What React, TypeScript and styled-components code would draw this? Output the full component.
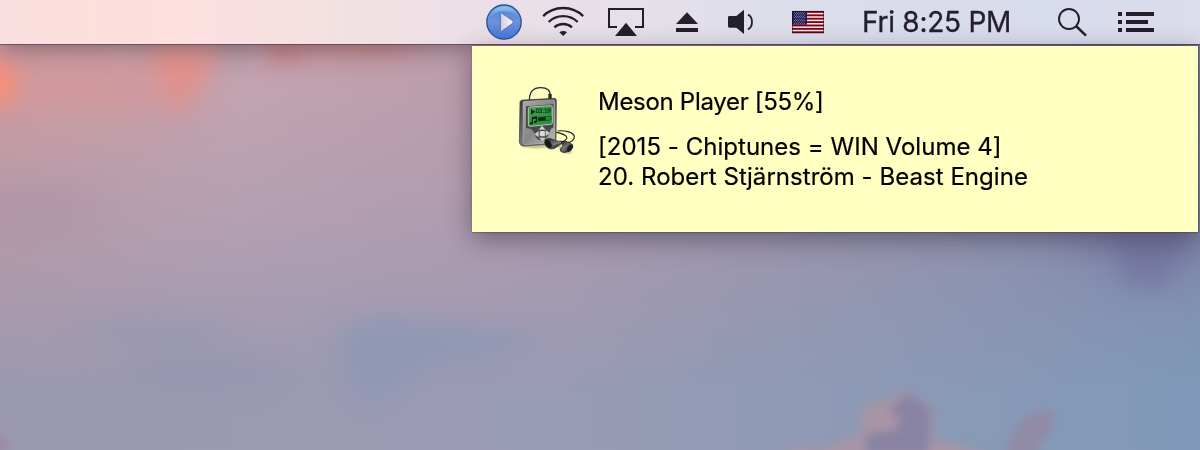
import React from "react";
import styled, { createGlobalStyle } from "styled-components";

const Global = createGlobalStyle`
  * { box-sizing: border-box; }
  body { margin: 0; overflow: hidden; }
`;

const Desktop = styled.div`
  display: grid;
  width: 1200px;
  height: 450px;
  overflow: hidden;
  font-family: Inter, "Liberation Sans", sans-serif;
`;

const Wallpaper = styled.svg`
  grid-area: 1 / 1;
  width: 1200px;
  height: 450px;
  display: block;
`;

const Screen = styled.div`
  grid-area: 1 / 1;
  z-index: 1;
  display: flex;
  flex-direction: column;
`;

const MenuBar = styled.header`
  flex: none;
  display: flex;
  align-items: flex-start;
  height: 44px;
  padding-left: 486px;
  color: #241f2b;
  background: linear-gradient(90deg, #fbdfe0 0, #fde0dc 90px, #fcdfe0 220px, #f3e1e2 330px, #ebdfe7 480px, #e5e0e9 640px, #dedeea 760px, #d9dceb 900px, #d9dcec 1100px, #dcdcea 1200px);
  box-shadow: 0 1px 0 rgba(73, 43, 65, 0.55), 0 3px 24px rgba(55, 35, 45, 0.5);
`;

const StatusIcon = styled.svg<{ $width: number; $gap?: number }>`
  flex: none;
  display: block;
  width: ${(p) => p.$width}px;
  height: 44px;
  margin-left: ${(p) => p.$gap ?? 0}px;
`;

const Clock = styled.time`
  flex: none;
  width: 152px;
  margin-left: 38px;
  font-size: 28px;
  line-height: 44px;
  letter-spacing: -0.25px;
  white-space: nowrap;
  -webkit-text-stroke: 0.35px currentColor;
`;

const Notification = styled.section`
  display: flex;
  align-self: flex-end;
  width: 726px;
  height: 186px;
  margin: 2px 2px 0 0;
  padding: 39px 0 0 45px;
  background: #ffffc1;
  color: #000;
  box-shadow: 0 0 1.5px 0.5px rgba(30, 20, 50, 0.75), 0 7px 24px rgba(35, 30, 45, 0.46);
`;

const PlayerIcon = styled.svg`
  flex: none;
  width: 60px;
  height: 70px;
`;

const Message = styled.div`
  display: flex;
  flex-direction: column;
  gap: 15px;
  padding: 2px 0 0 21px;
`;

const Line = styled.p<{ $spacing: number }>`
  margin: 0;
  font-size: 24px;
  line-height: 30px;
  letter-spacing: ${(p) => p.$spacing}px;
  white-space: nowrap;
  -webkit-text-stroke: 0.2px currentColor;
`;

const Sky = () => (
  <Wallpaper viewBox="0 0 1200 450" aria-hidden="true">
    <defs>
      <linearGradient id="low">
        <stop offset="0" stopColor="#9b99b0" />
        <stop offset=".45" stopColor="#9a9bb5" />
        <stop offset=".72" stopColor="#8d9ab5" />
        <stop offset="1" stopColor="#7f99b8" />
      </linearGradient>
      <linearGradient id="high">
        <stop offset="0" stopColor="#c99da3" />
        <stop offset=".2" stopColor="#c3a3b0" />
        <stop offset=".4" stopColor="#bb9cab" />
        <stop offset="1" stopColor="#8482a6" />
      </linearGradient>
      <linearGradient id="fade" x2="0" y2="1">
        <stop offset=".2" stopColor="#fff" />
        <stop offset=".5" stopColor="#fff" stopOpacity=".6" />
        <stop offset=".86" stopColor="#fff" stopOpacity="0" />
      </linearGradient>
      <mask id="top" style={{ maskType: "alpha" }}><rect width="1200" height="450" fill="url(#fade)" /></mask>
      <filter id="b4" x="-50%" y="-50%" width="200%" height="200%" colorInterpolationFilters="sRGB"><feGaussianBlur stdDeviation="5" /></filter>
      <filter id="b10" x="-50%" y="-100%" width="200%" height="300%" colorInterpolationFilters="sRGB"><feGaussianBlur stdDeviation="11" /></filter>
      <filter id="b25" x="-50%" y="-100%" width="200%" height="300%" colorInterpolationFilters="sRGB"><feGaussianBlur stdDeviation="22" /></filter>
    </defs>
    <rect width="1200" height="450" fill="url(#low)" />
    <rect width="1200" height="450" fill="url(#high)" mask="url(#top)" />
    <g filter="url(#b25)">
      <ellipse cx="90" cy="85" rx="110" ry="26" fill="#dc9292" opacity=".6" />
      <ellipse cx="30" cy="210" rx="70" ry="20" fill="#a78da9" opacity=".6" />
      <ellipse cx="1150" cy="240" rx="90" ry="28" fill="#7674a0" opacity=".5" />
    </g>
    <g filter="url(#b10)">
      <ellipse cx="0" cy="83" rx="16" ry="25" fill="#fc8d76" />
      <path d="M150 44H222L212 70 177 116 163 92Z" fill="#f0897c" opacity=".6" />
      <ellipse cx="285" cy="50" rx="22" ry="15" fill="#cf6f72" opacity=".6" />
      <ellipse cx="360" cy="44" rx="60" ry="16" fill="#d27e78" opacity=".5" />
      <ellipse cx="235" cy="48" rx="15" ry="18" fill="#a88f9b" opacity=".6" />
      <path d="M70 328Q150 312 235 330L210 342Q130 348 70 328Z" fill="#9098b3" opacity=".6" />
      <path d="M335 335Q375 306 410 320L550 337Q480 362 430 364L370 404 345 370Z" fill="#8896b5" opacity=".65" />
      <ellipse cx="200" cy="372" rx="75" ry="18" fill="#9496b0" opacity=".55" />
      <path d="M1110 234H1190L1165 290 1124 285Z" fill="#6d6b99" opacity=".55" />
    </g>
    <g filter="url(#b4)">
      <path d="M770 460Q795 444 820 450L850 440 862 434 862 414Q867 402 888 400L904 391 931 407Q938 426 929 440L955 444 1000 460Z" fill="#b3939f" opacity=".75" />
      <path d="M895 405L907 393 931 410 928 455H866L865 435 895 430 901 420 888 410Z" fill="#817ea2" opacity=".8" />
      <path d="M1002 460L1014 432Q1022 416 1038 411L1055 412Q1055 428 1043 440L1032 460Z" fill="#9686a2" opacity=".75" />
      <ellipse cx="0" cy="444" rx="6" ry="8" fill="#a4819d" />
    </g>
  </Wallpaper>
);

const PlayStatus = () => (
  <StatusIcon $width={36} viewBox="0 0 108 132">
    <defs>
      <linearGradient id="ball" x2="0" y2="1">
        <stop offset="0" stopColor="#4f86d2" />
        <stop offset=".5" stopColor="#6d91dc" />
        <stop offset="1" stopColor="#4478d8" />
      </linearGradient>
      <linearGradient id="gloss" x2="0" y2="1">
        <stop offset="0" stopColor="#8ecbee" />
        <stop offset="1" stopColor="#6b9fe0" stopOpacity=".3" />
      </linearGradient>
      <linearGradient id="arrow"><stop stopColor="#d3cbdc" /><stop offset="1" stopColor="#fbf8ff" /></linearGradient>
    </defs>
    <circle cx="54" cy="66" r="51.5" fill="url(#ball)" stroke="#2d4e9c" strokeWidth="4" />
    <path d="M10 54C16 10 86 6 98 51C86 38 70 32 50 34C29 36 18 45 10 54Z" fill="url(#gloss)" />
    <path d="M43 40Q43 36 47 39L80 62Q84 66 80 70L47 94Q43 96 43 92Z" fill="url(#arrow)" stroke="#5070b8" strokeWidth="3" />
  </StatusIcon>
);

const WifiStatus = () => (
  <StatusIcon $width={42} $gap={20} viewBox="216 0 126 132">
    <g fill="none" stroke="currentColor" strokeWidth="6.8">
      <path d="M219.500 48.500Q244 24 279.500 24T339.500 48.500" />
      <path d="M236 66Q254 48.500 279.500 48.500T323 66" />
      <path d="M253 82Q264 72 279.500 72T306 82" />
    </g>
    <path d="M268 97Q279.500 89 291 97L279.500 108Z" fill="currentColor" />
  </StatusIcon>
);

const AirPlayStatus = () => (
  <StatusIcon $width={36} $gap={24} viewBox="414 0 108 132">
    <path d="M441 81H417V27H519V81H495" fill="none" stroke="currentColor" strokeWidth="6" />
    <path d="M468 68L501 108H435Z" fill="currentColor" />
  </StatusIcon>
);

const EjectStatus = () => (
  <StatusIcon $width={22} $gap={32} viewBox="48 0 66 132">
    <path d="M81 37L114 72H48ZM48 84H114V96H48Z" fill="currentColor" />
  </StatusIcon>
);

const VolumeStatus = () => (
  <StatusIcon $width={26} $gap={30} viewBox="204 0 78 132">
    <path d="M208 48H229L252 29V102L229 83H208Q204 83 204 79V52Q204 48 208 48Z" fill="currentColor" />
    <path d="M264 44Q276 50 276 66T264 88" fill="none" stroke="currentColor" strokeWidth="5.5" />
  </StatusIcon>
);

const FlagStatus = () => (
  <StatusIcon $width={32} $gap={38} viewBox="0 0 96 132">
    <rect y="33" width="96" height="66" fill="#eeeaf1" />
    {[0, 2, 4, 6, 8, 10, 12].map((i) => (
      <rect key={i} y={33 + i * 5.077} width="96" height="5.6" fill="#83030f" />
    ))}
    <rect y="33" width="45" height="41" fill="#201e55" />
    {Array.from({ length: 9 }, (_, row) =>
      Array.from({ length: row % 2 ? 5 : 6 }, (_, col) => (
        <circle key={`${row}-${col}`} cx={7.500 + col * 6.2 + (row % 2) * 3.1} cy={37 + row * 4.1} r="1.35" fill="#d9d6e8" />
      ))
    )}
    <rect x="1" y="34" width="94" height="64" fill="none" stroke="#270916" strokeOpacity=".7" strokeWidth="2.5" />
  </StatusIcon>
);

const SearchStatus = () => (
  <StatusIcon $width={30} $gap={44} viewBox="654 0 90 132">
    <circle cx="687" cy="57" r="30" fill="none" stroke="currentColor" strokeWidth="5.8" />
    <path d="M708 78L738 107" stroke="currentColor" strokeWidth="7.5" />
  </StatusIcon>
);

const ListStatus = () => (
  <StatusIcon $width={36} $gap={30} viewBox="834 0 108 132">
    <path d="M834 36h12v12h-12zM858 36h84v12h-84zM834 60h12v12h-12zM858 60h66v12h-66zM834 84h12v12h-12zM858 84h84v12h-84z" fill="currentColor" />
  </StatusIcon>
);

const MusicPlayer = () => (
  <PlayerIcon viewBox="36 30 180 210">
    <defs>
      <linearGradient id="case" x2="1" y2="1"><stop stopColor="#aaa" /><stop offset=".5" stopColor="#888" /><stop offset="1" stopColor="#b9b9b9" /></linearGradient>
      <linearGradient id="side" x2="0" y2="1"><stop stopColor="#3c3c3c" /><stop offset="1" stopColor="#777" /></linearGradient>
      <linearGradient id="lcd" x2="1" y2="1"><stop stopColor="#4a9e51" /><stop offset="1" stopColor="#229033" /></linearGradient>
      <linearGradient id="bud" x2="1" y2="1"><stop stopColor="#161616" /><stop offset=".45" stopColor="#6c6c6c" /><stop offset="1" stopColor="#080808" /></linearGradient>
      <filter id="soft"><feGaussianBlur stdDeviation="3" /></filter>
    </defs>
    <path d="M50 211Q100 221 156 207L185 232 198 232" fill="none" stroke="#282818" strokeWidth="6" opacity=".45" filter="url(#soft)" />
    <path d="M73 77C73 51 86 38 107 38C127 38 137 47 135 62" fill="none" stroke="#242424" strokeWidth="3.5" />
    <path d="M130 57Q135 54 140 58V77H130Z" fill="#222" />
    <path d="M132 60V73" stroke="#777" strokeWidth="1.500" />
    <path d="M45 80Q46 75 55 75L148 70Q155 71 154 78L153 199Q152 206 145 207L55 213Q44 211 43 202Z" fill="url(#side)" stroke="#383838" strokeWidth="2" />
    <path d="M57 79L145 74Q150 74 150 79L149 194Q149 202 142 203L59 209Q54 208 54 202V84Q54 80 57 79Z" fill="url(#case)" stroke="#c8c8c8" strokeWidth="1.300" />
    <path d="M63 94L145 88V158Q138 157 134 171Q126 195 108 196Q92 195 88 175Q83 159 63 160Z" fill="#474747" />
    <path d="M70 101Q70 97 75 96L137 92Q142 92 142 97V143Q142 148 137 148L75 154Q70 154 70 149Z" fill="url(#lcd)" stroke="#d3d3d3" strokeWidth="2.500" />
    <path d="M78 102L91 110 78 119Z" fill="#082b12" />
    <text x="92" y="114" fontFamily="Liberation Sans, sans-serif" fontSize="19" textLength="46" lengthAdjust="spacingAndGlyphs" fill="#062812" stroke="#062812" strokeWidth=".5" transform="rotate(-2 92 114)">03:19</text>
    <path d="M82 144V128L94 125V140M82 131L94 128" fill="none" stroke="#07280f" strokeWidth="3.500" />
    <ellipse cx="79" cy="145" rx="4.500" ry="3.500" fill="#07280f" /><ellipse cx="91" cy="141" rx="4.500" ry="3.500" fill="#07280f" />
    <path d="M99 127L138 124V135L99 138Z" fill="#279139" stroke="#07280f" strokeWidth="1.500" />
    <path d="M100 128L122 126V136L100 138Z" fill="#07280f" />
    <g fill="#d4d4d4" stroke="#777" strokeWidth="1">
      <path d="M111 152L122 164H101ZM88 178L101 168V187ZM135 174L122 165V184ZM112 199L102 188H122Z" />
      <rect x="104" y="168" width="16" height="16" rx="3" fill="#ddd" />
    </g>
    <path d="M158 168C180 165 207 172 208 185C208 194 198 202 189 202M154 172C184 178 194 188 178 197" fill="none" stroke="#202020" strokeWidth="3.500" />
    <path d="M120 195Q127 186 146 194Q157 200 170 198L178 202Q167 207 151 219Q136 227 125 216Q116 205 120 195Z" fill="url(#bud)" stroke="#111" strokeWidth="1.500" />
    <ellipse cx="130" cy="207" rx="8" ry="13" fill="#171717" transform="rotate(-35 130 207)" />
    <path d="M145 209Q158 204 169 202" stroke="#999" strokeWidth="2.500" fill="none" />
    <path d="M169 201Q177 193 190 202L203 209Q207 217 196 228L176 233Q163 230 166 222L174 214Z" fill="url(#bud)" stroke="#161616" strokeWidth="2" />
    <path d="M178 211L172 226M183 213L178 229" stroke="#888" strokeWidth="2" />
    <ellipse cx="194" cy="219" rx="6" ry="11" fill="#202020" transform="rotate(28 194 219)" />
  </PlayerIcon>
);

export default function App() {
  return (
    <Desktop>
      <Global />
      <Sky />
      <Screen>
        <MenuBar>
          <PlayStatus />
          <WifiStatus />
          <AirPlayStatus />
          <EjectStatus />
          <VolumeStatus />
          <FlagStatus />
          <Clock>Fri 8:25 PM</Clock>
          <SearchStatus />
          <ListStatus />
        </MenuBar>
        <Notification>
          <MusicPlayer />
          <Message>
            <Line $spacing={-0.3}>Meson Player [55%]</Line>
            <div>
              <Line $spacing={0.03}>[2015 - Chiptunes = WIN Volume 4]</Line>
              <Line $spacing={0.04}>20. Robert Stjärnström - Beast Engine</Line>
            </div>
          </Message>
        </Notification>
      </Screen>
    </Desktop>
  );
}
